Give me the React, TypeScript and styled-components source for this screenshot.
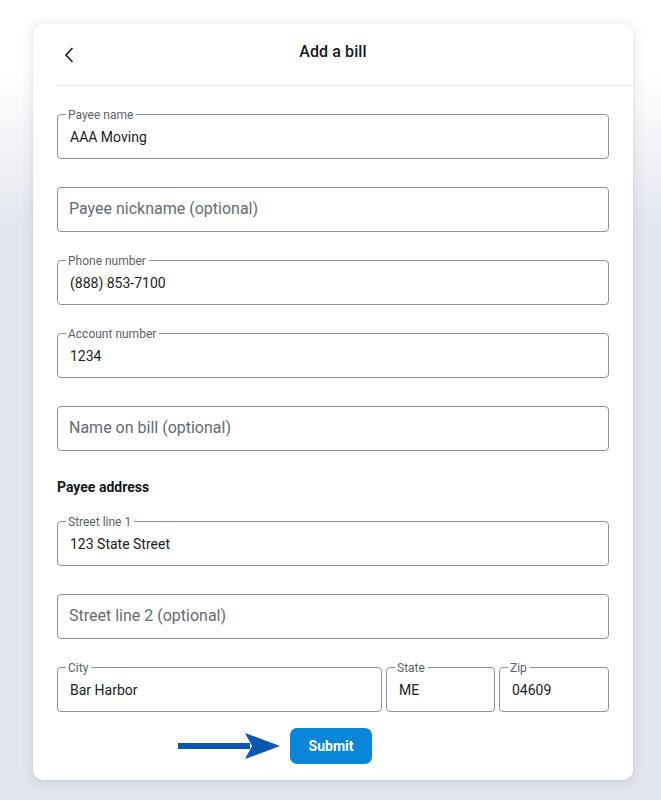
import React from "react";
import styled, { createGlobalStyle } from "styled-components";

const GlobalStyle = createGlobalStyle`
  html, body {
    margin: 0;
    padding: 0;
  }
  body {
    font-family: Roboto, "Noto Sans", "Liberation Sans", sans-serif;
    background: linear-gradient(to bottom, #ffffff 0px, #ffffff 70px, #e3e6ee 230px, #e3e6ee 100%);
    min-height: 800px;
  }
  * { box-sizing: border-box; }
`;

const Page = styled.div`
  padding: 24px 28px 21px 33px;
  min-height: 800px;
`;

const Card = styled.div`
  width: 600px;
  background: #ffffff;
  border-radius: 10px;
  box-shadow: 0 2px 14px rgba(40, 50, 80, 0.13), 0 1px 3px rgba(40, 50, 80, 0.06);
  display: flex;
  flex-direction: column;
`;

const Header = styled.div`
  position: relative;
  margin-left: 24px;
  height: 62px;
  border-bottom: 1px solid #e4e6ea;
  display: flex;
  align-items: center;
  justify-content: center;
  padding-right: 24px;
`;

const BackButton = styled.button`
  position: absolute;
  left: 4px;
  top: 22px;
  width: 16px;
  height: 18px;
  border: none;
  background: none;
  padding: 0;
  display: flex;
  align-items: center;
  justify-content: center;
  cursor: pointer;
`;

const Title = styled.h1`
  margin: 0 0 6px 0;
  font-size: 16px;
  font-weight: 500;
  color: #15171a;
  letter-spacing: 0.1px;
`;

const Body = styled.form`
  padding: 21px 24px 16px 24px;
  display: flex;
  flex-direction: column;
`;

const FieldStack = styled.div`
  display: flex;
  flex-direction: column;
  gap: 21px;
`;

const Fieldset = styled.fieldset`
  margin: 0;
  padding: 0 8px 7px 8px;
  border: 1px solid #8d9299;
  border-radius: 4px;
  min-width: 0;
`;

const Legend = styled.legend<{ $empty?: boolean }>`
  font-size: 12px;
  line-height: 14px;
  height: 14px;
  color: #5e6268;
  padding: ${(p) => (p.$empty ? "0" : "0 3px 0 2px")};
  margin-left: 0;
`;

const LegendText = styled.span`
  position: relative;
  top: 1px;
`;

const Value = styled.div<{ $placeholder?: boolean }>`
  height: 30px;
  line-height: 30px;
  padding-top: ${(p) => (p.$placeholder ? "0" : "1px")};
  padding-left: ${(p) => (p.$placeholder ? "3px" : "4px")};
  font-size: ${(p) => (p.$placeholder ? "16px" : "14px")};
  color: ${(p) => (p.$placeholder ? "#676b72" : "#1b1d21")};
  white-space: nowrap;
  overflow: hidden;
`;

const SectionTitle = styled.h2`
  margin: 26px 0 17px 0;
  font-size: 14px;
  line-height: 20px;
  font-weight: 700;
  color: #15171a;
`;

const AddressRow = styled.div`
  display: grid;
  grid-template-columns: 1fr 109px 110px;
  gap: 4px;
`;

const Actions = styled.div`
  display: flex;
  justify-content: center;
  margin-top: 16px;
  padding-right: 4px;
`;

const SubmitWrap = styled.div`
  position: relative;
`;

const SubmitButton = styled.button`
  width: 82px;
  height: 36px;
  border: none;
  border-radius: 7px;
  background: #0a86d8;
  color: #ffffff;
  font-family: Roboto, "Noto Sans", "Liberation Sans", sans-serif;
  font-size: 14px;
  font-weight: 700;
  cursor: pointer;
`;

const Arrow = styled.svg`
  position: absolute;
  right: 92px;
  top: 5px;
`;

type FieldProps = { label: string; value?: string };

function Field({ label, value }: FieldProps) {
  const filled = value !== undefined;
  return (
    <Fieldset>
      <Legend $empty={!filled}>{filled ? <LegendText>{label}</LegendText> : ""}</Legend>
      <Value $placeholder={!filled}>{filled ? value : label}</Value>
    </Fieldset>
  );
}

export default function App() {
  return (
    <>
      <GlobalStyle />
      <Page>
        <Card>
          <Header>
            <BackButton type="button" aria-label="Back">
              <svg width="10" height="16" viewBox="0 0 10 16">
                <path d="M8 1.5 L2 8 L8 14.5" fill="none" stroke="#1c1f24" strokeWidth="1.7" strokeLinecap="round" strokeLinejoin="round" />
              </svg>
            </BackButton>
            <Title>Add a bill</Title>
          </Header>
          <Body onSubmit={(e) => e.preventDefault()}>
            <FieldStack>
              <Field label="Payee name" value="AAA Moving" />
              <Field label="Payee nickname (optional)" />
              <Field label="Phone number" value="(888) 853-7100" />
              <Field label="Account number" value="1234" />
              <Field label="Name on bill (optional)" />
            </FieldStack>
            <SectionTitle>Payee address</SectionTitle>
            <FieldStack>
              <Field label="Street line 1" value="123 State Street" />
              <Field label="Street line 2 (optional)" />
              <AddressRow>
                <Field label="City" value="Bar Harbor" />
                <Field label="State" value="ME" />
                <Field label="Zip" value="04609" />
              </AddressRow>
            </FieldStack>
            <Actions>
              <SubmitWrap>
                <Arrow width="102" height="26" viewBox="0 0 102 26">
                  <rect x="0" y="10" width="72" height="6" fill="#0b55b3" />
                  <path d="M67 0 L102 13 L67 26 L74 13 Z" fill="#0b55b3" />
                </Arrow>
                <SubmitButton type="submit">Submit</SubmitButton>
              </SubmitWrap>
            </Actions>
          </Body>
        </Card>
      </Page>
    </>
  );
}
